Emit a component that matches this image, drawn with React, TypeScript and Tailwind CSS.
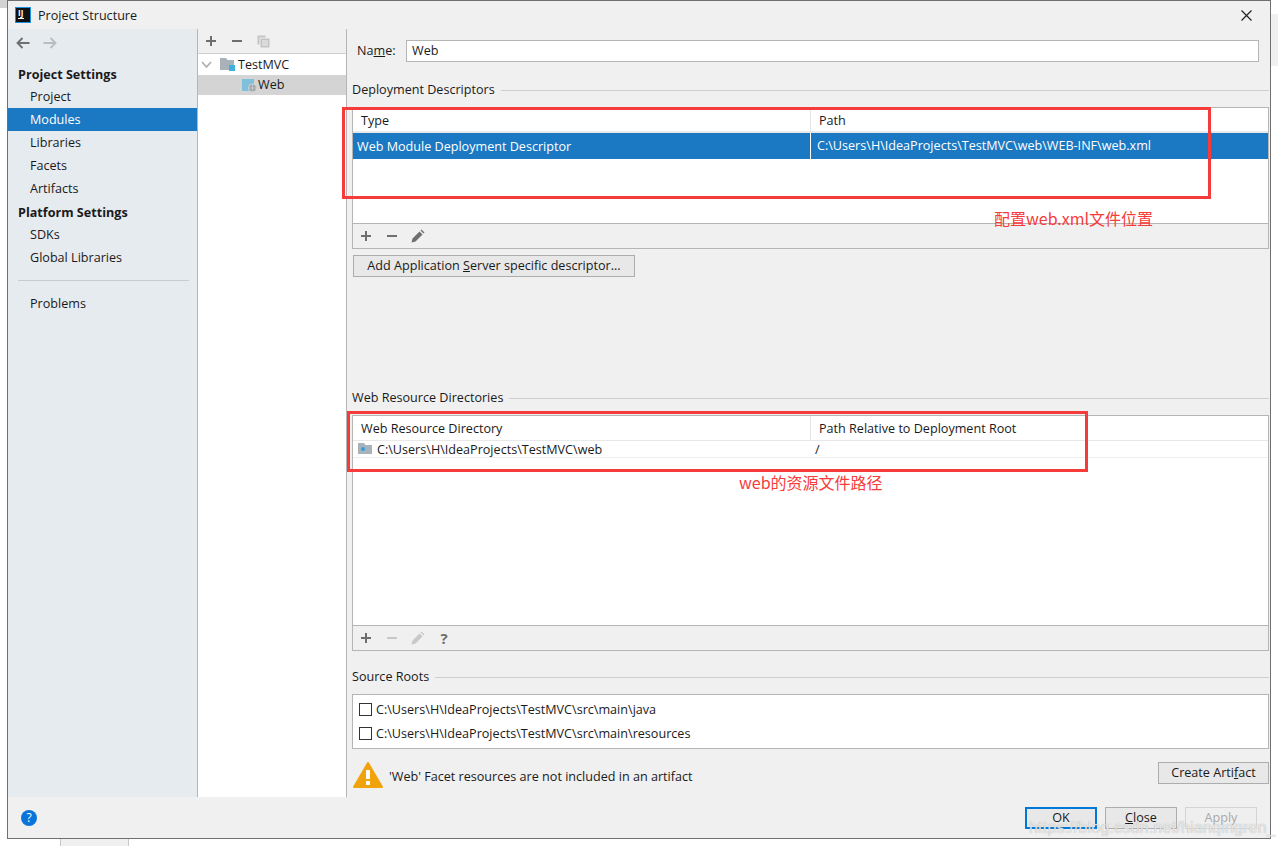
const navBtn = 'flex h-[23px] items-center pl-[22px] pt-[2px] text-[12.6px]';

function NavItem({ label, active }: { label: string; active?: boolean }) {
  return <div className={`${navBtn} ${active ? 'bg-[#1b78c2] text-white' : 'text-[#1a1a1a]'}`}>{label}</div>;
}

function NavHeading({ label }: { label: string }) {
  return <div className="flex h-[23px] items-center pl-[10px] pt-[4px] text-[12.6px] font-bold text-[#1a1a1a]">{label}</div>;
}

function Plus({ color = '#6e6e6e' }: { color?: string }) {
  return (
    <svg width="12" height="12" viewBox="0 0 12 12">
      <path d="M1 6h10M6 1v10" stroke={color} strokeWidth="2" fill="none" />
    </svg>
  );
}

function Minus({ color = '#6e6e6e' }: { color?: string }) {
  return (
    <svg width="12" height="12" viewBox="0 0 12 12">
      <path d="M1 6h10" stroke={color} strokeWidth="2" fill="none" />
    </svg>
  );
}

function Pencil({ color = '#6e6e6e' }: { color?: string }) {
  return (
    <svg className="-mx-px" width="14" height="14" viewBox="0 0 14 14">
      <path d="M0.5 13.5l1-4 7-7 3 3-7 7zM9.5 1.5l1-1 3 3-1 1z" fill={color} />
    </svg>
  );
}

function SectionTitle({ label }: { label: string }) {
  return (
    <div className="flex h-[18px] items-center text-[12.6px] text-[#1a1a1a]">
      <span>{label}</span>
      <div className="ml-[6px] h-px flex-1 bg-[#cfcfcf]" />
    </div>
  );
}

function Btn({ children, w, disabled }: { children: React.ReactNode; w: string; disabled?: boolean }) {
  return (
    <div className={`flex h-[22px] items-center justify-center border bg-[#e8e8e8] text-[12.6px] ${w} ${disabled ? 'border-[#d4d4d4] bg-[#efefef] text-[#a8a8a8]' : 'border-[#adadad] text-[#1a1a1a]'}`}>
      {children}
    </div>
  );
}

function SourceRow({ path }: { path: string }) {
  return (
    <div className="flex h-[24px] items-center pl-[6px] text-[12.6px] text-[#1a1a1a]">
      <div className="mr-[4px] h-[13px] w-[13px] border border-[#333333] bg-white" />
      <span className="pt-[2px]">{path}</span>
    </div>
  );
}

export default function App() {
  return (
    <div className="relative h-[846px] w-[1278px] overflow-hidden bg-white pl-[7px] font-['Open_Sans',sans-serif]">
      {/* bits of the windows behind */}
      <div className="absolute left-0 top-0 h-[8px] w-[7px] bg-[#d2d2d2]" />
      <div className="absolute left-[1271px] top-[14px] h-[52px] w-[7px] bg-[#f0f0f0]" />
      <div className="absolute left-[60px] top-[839px] h-[7px] w-[69px] border-x border-[#c8c8c8] bg-[#f0f0f0]" />

      <div className="flex h-[839px] w-[1264px] flex-col border border-[#6f6f6f] bg-[#f0f0f0]">
        {/* title bar */}
        <div className="flex h-[28px] shrink-0 items-center pl-[7px] pr-[18px]">
          <div className="flex h-[16px] w-[16px] flex-col items-start justify-start border border-[#1f8fe0] bg-[#111111] pl-[2px] text-[8px] font-bold leading-[9px] text-white">
            IJ
            <div className="mt-[1px] h-px w-[6px] bg-white" />
          </div>
          <span className="ml-[7px] mt-[2px] text-[12.6px] text-[#1a1a1a]">Project Structure</span>
          <svg className="ml-auto" width="11" height="11" viewBox="0 0 11 11">
            <path d="M0.5 0.5l10 10M10.5 0.5l-10 10" stroke="#222222" strokeWidth="1.2" fill="none" />
          </svg>
        </div>

        <div className="flex h-[768px] shrink-0">
          {/* left nav */}
          <div className="w-[190px] shrink-0 border-r border-[#b5b5b5] bg-[#e6ebf0]">
            <div className="flex h-[33px] items-center gap-[13px] pb-[6px] pl-[8px]">
              <svg width="14" height="12" viewBox="0 0 14 12">
                <path d="M13.5 6H2M6.5 1L1.5 6l5 5" stroke="#6e6e6e" strokeWidth="1.8" fill="none" />
              </svg>
              <svg width="14" height="12" viewBox="0 0 14 12">
                <path d="M0.5 6H12M7.5 1l5 5-5 5" stroke="#b9bdc1" strokeWidth="1.8" fill="none" />
              </svg>
            </div>
            <NavHeading label="Project Settings" />
            <NavItem label="Project" />
            <NavItem label="Modules" active />
            <NavItem label="Libraries" />
            <NavItem label="Facets" />
            <NavItem label="Artifacts" />
            <NavHeading label="Platform Settings" />
            <NavItem label="SDKs" />
            <NavItem label="Global Libraries" />
            <div className="flex h-[23px] items-center pl-[10px] pr-[8px]">
              <div className="h-px w-full bg-[#c8cccf]" />
            </div>
            <NavItem label="Problems" />
          </div>

          {/* module tree */}
          <div className="flex w-[149px] shrink-0 flex-col border-r border-[#b5b5b5]">
            <div className="flex h-[25px] shrink-0 items-center gap-[14px] border-b border-[#d0d0d0] pl-[7px]">
              <Plus />
              <Minus />
              <svg width="13" height="13" viewBox="0 0 13 13">
                <path d="M0.5 0.5h8v2H2.5v7h-2z" fill="#c4c4c4" />
                <path d="M3.5 3.5h9v9h-9z" fill="#c4c4c4" />
                <path d="M5 6h6M5 8h6M5 10h6" stroke="#f0f0f0" strokeWidth="1" />
              </svg>
            </div>
            <div className="flex-1 bg-white text-[12.6px] text-[#1a1a1a]">
              <div className="flex h-[21px] items-center pl-[3px]">
                <svg width="11" height="8" viewBox="0 0 11 8">
                  <path d="M1 1l4.5 5L10 1" stroke="#b0b0b0" strokeWidth="1.8" fill="none" />
                </svg>
                <svg className="ml-[8px]" width="15" height="15" viewBox="0 0 15 15">
                  <path d="M0 1h6l1.5 2H14v10H0z" fill="#a9b2b8" />
                  <rect x="9" y="8" width="6" height="6" fill="#3eb0dc" />
                </svg>
                <span className="ml-[3px] pt-[2px]">TestMVC</span>
              </div>
              <div className="flex h-[20px] items-center bg-[#d4d4d4] pl-[44px]">
                <svg width="15" height="15" viewBox="0 0 15 15">
                  <rect x="0" y="1" width="12" height="12" fill="#7fc0dc" />
                  <circle cx="10.5" cy="10" r="4" fill="#9aa3a8" stroke="#d4d4d4" />
                  <path d="M7 10h7M10.5 6.5v7" stroke="#d4d4d4" strokeWidth="0.7" />
                </svg>
                <span className="ml-[1px]">Web</span>
              </div>
            </div>
          </div>

          {/* detail panel */}
          <div className="flex min-w-0 flex-1 flex-col pl-[5px] pr-px pt-[11px]">
            <div className="flex h-[22px] shrink-0 items-center pl-[5px] pr-[10px] text-[12.6px] text-[#1a1a1a]">
              <span className="w-[49px]">
                Na<span className="underline">m</span>e:
              </span>
              <div className="flex h-[22px] flex-1 items-center border border-[#b5b5b5] bg-white pl-[5px]">Web</div>
            </div>

            <div className="mt-[19px]">
              <SectionTitle label="Deployment Descriptors" />
            </div>
            <div className="mt-[8px] flex h-[142px] shrink-0 flex-col border border-[#b5b5b5]">
              <div className="flex-1 bg-white text-[12.6px]">
                <div className="flex h-[25px] items-center border-b-2 border-[#e8e8e8] text-[#1a1a1a]">
                  <div className="w-[458px] border-r border-[#e4e4e4] pl-[8px] pt-[2px] leading-[21px]">Type</div>
                  <div className="pl-[8px] pt-[2px] leading-[21px]">Path</div>
                </div>
                <div className="flex h-[26px] items-center bg-[#1b78c2] text-white">
                  <div className="w-[458px] border-r border-white pl-[4px] pt-[2px] leading-[24px]">Web Module Deployment Descriptor</div>
                  <div className="pl-[6px] pt-px">C:\Users\H\IdeaProjects\TestMVC\web\WEB-INF\web.xml</div>
                </div>
              </div>
              <div className="flex h-[25px] shrink-0 items-center gap-[14px] border-t border-[#b5b5b5] pl-[7px]">
                <Plus />
                <Minus />
                <Pencil />
              </div>
            </div>
            <div className="mt-[6px] pl-px">
              <Btn w="w-[282px]">
                <span className="pt-px">
                  Add Application <span className="underline">S</span>erver specific descriptor...
                </span>
              </Btn>
            </div>

            <div className="mt-[112px]">
              <SectionTitle label="Web Resource Directories" />
            </div>
            <div className="mt-[8px] flex h-[236px] shrink-0 flex-col border border-[#b5b5b5]">
              <div className="flex-1 bg-white text-[12.6px] text-[#1a1a1a]">
                <div className="flex h-[25px] items-center border-b border-[#e8e8e8]">
                  <div className="w-[458px] border-r border-[#e4e4e4] pl-[8px] pt-[2px] leading-[22px]">Web Resource Directory</div>
                  <div className="pl-[8px] pt-[2px]">Path Relative to Deployment Root</div>
                </div>
                <div className="flex h-[17px] items-center border-b border-[#eeeeee]">
                  <div className="flex w-[458px] items-center pl-[5px]">
                    <svg width="14" height="12" viewBox="0 0 14 12">
                      <path d="M0 0h6l1.5 2H14v9H0z" fill="#a9b2b8" />
                      <circle cx="5" cy="6" r="2" fill="#2f9fe0" />
                    </svg>
                    <span className="ml-[5px] pt-[2px]">C:\Users\H\IdeaProjects\TestMVC\web</span>
                  </div>
                  <div className="pl-[4px] pt-[2px]">/</div>
                </div>
              </div>
              <div className="flex h-[25px] shrink-0 items-center gap-[14px] border-t border-[#b5b5b5] pl-[7px]">
                <Plus />
                <Minus color="#c8c8c8" />
                <Pencil color="#c8c8c8" />
                <span className="w-[12px] text-center text-[15px] font-bold leading-none text-[#6e6e6e]">?</span>
              </div>
            </div>

            <div className="mt-[17px]">
              <SectionTitle label="Source Roots" />
            </div>
            <div className="mt-[8px] h-[55px] shrink-0 border border-[#b5b5b5] bg-white pt-[2px]">
              <SourceRow path="C:\Users\H\IdeaProjects\TestMVC\src\main\java" />
              <SourceRow path="C:\Users\H\IdeaProjects\TestMVC\src\main\resources" />
            </div>
            <div className="mt-[13px] flex items-start">
              <svg className="ml-px" width="30" height="26" viewBox="0 0 30 26">
                <path d="M15 1L29 25H1z" fill="#f0a30a" stroke="#f0a30a" strokeWidth="2" strokeLinejoin="round" />
                <rect x="13" y="8" width="4" height="9" fill="#ffffff" />
                <rect x="13" y="19" width="4" height="4" fill="#ffffff" />
              </svg>
              <span className="ml-[6px] mt-[6px] text-[12.6px] text-[#1a1a1a]">'Web' Facet resources are not included in an artifact</span>
              <div className="ml-auto">
                <Btn w="w-[111px]">
                  <span>
                    Create Arti<span className="underline">f</span>act
                  </span>
                </Btn>
              </div>
            </div>
          </div>
        </div>

        {/* footer */}
        <div className="flex flex-1 items-center pl-[13px] pr-[13px]">
          <div className="flex h-[16px] w-[16px] items-center justify-center rounded-full bg-[#0a74da] text-[12px] leading-none text-white">?</div>
          <div className="ml-auto flex gap-[8px]">
            <div className="flex h-[22px] w-[72px] items-center justify-center border-2 border-[#0078d7] bg-[#e8e8e8] pt-[2px] text-[12.6px] text-[#1a1a1a]">OK</div>
            <Btn w="w-[72px]">
              <span className="pt-[2px]">
                <span className="underline">C</span>lose
              </span>
            </Btn>
            <Btn w="w-[72px]" disabled>
              <span className="pt-[2px]">Apply</span>
            </Btn>
          </div>
        </div>
      </div>

      {/* red annotations */}
      <div className="absolute left-[342px] top-[107px] h-[92px] w-[869px] border-[3px] border-[#f63b3b]" />
      <div className="absolute left-[347px] top-[411px] h-[61px] w-[741px] border-[3px] border-[#f63b3b]" />
      <div className="absolute left-[994px] top-[207px] font-['Noto_Sans_CJK_SC','Liberation_Sans',sans-serif] text-[16px] leading-[22px] text-[#f63b3b]">配置web.xml文件位置</div>
      <div className="absolute left-[739px] top-[471px] font-['Noto_Sans_CJK_SC','Liberation_Sans',sans-serif] text-[16px] leading-[22px] text-[#f63b3b]">web的资源文件路径</div>
      <div className="absolute left-[1029px] top-[818px] font-['Liberation_Sans',sans-serif] text-[16px] leading-[20px] tracking-[0.2px] text-white/70 [text-shadow:0_0_1px_#a0a0a0]">https://blog.csdn.net/hianqingren_</div>
    </div>
  );
}
